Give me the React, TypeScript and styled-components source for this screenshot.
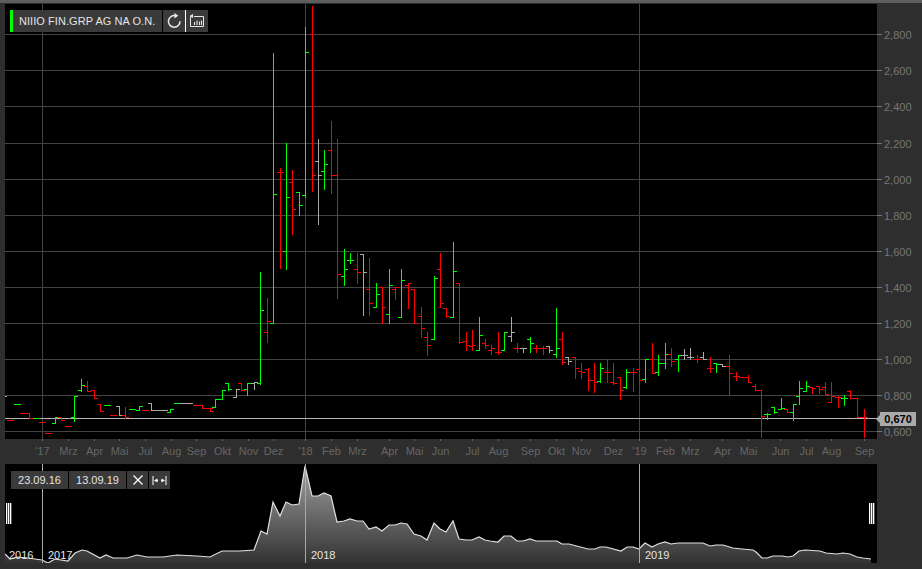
import React from 'react';
import styled, { createGlobalStyle } from 'styled-components';

const GlobalStyle = createGlobalStyle`
  html, body {
    margin: 0;
    padding: 0;
    background: #2e2e2e;
  }
`;

const Page = styled.div`
  width: 922px;
  height: 569px;
  box-sizing: border-box;
  padding: 4px 0 0 5px;
  overflow: hidden;
  position: relative;
  background: #2e2e2e;
  border-top: 0;
  font-family: 'Liberation Sans', Arial, sans-serif;
  box-shadow: inset 0 3px 0 #5e5e5e;
`;

const ChartArea = styled.div`
  position: relative;
  width: 917px;
  height: 460px;
`;

const ChartSvg = styled.svg`
  display: block;
  width: 917px;
  height: 460px;
  font-family: 'Liberation Sans', Arial, sans-serif;
  font-size: 11px;
`;

const Toolbar = styled.div`
  position: absolute;
  left: 5px;
  top: 6px;
  height: 22px;
  display: flex;
  align-items: stretch;
`;

const TitleBox = styled.div`
  display: flex;
  align-items: center;
  height: 22px;
  box-sizing: border-box;
  width: 152px;
  margin-right: 1px;
  padding-left: 6px;
  background: #3a3a3a;
  border-left: 3px solid #00ff00;
  color: #e4e4e4;
  font-size: 11px;
  letter-spacing: 0.06px;
  white-space: nowrap;
`;

const ToolButton = styled.div<{ $divided?: boolean }>`
  display: flex;
  align-items: center;
  justify-content: center;
  width: 22px;
  height: 22px;
  background: #3a3a3a;
  border-right: ${(p) => (p.$divided ? '1px solid #ffffff' : '0')};
`;

const PriceBadge = styled.div`
  position: absolute;
  left: 875px;
  top: 408px;
  width: 36px;
  height: 14px;
  background: #aaaaaa;
  color: #000000;
  font-size: 11px;
  font-weight: 700;
  line-height: 14px;
  text-align: center;

  &::before {
    content: '';
    position: absolute;
    left: -4px;
    top: 3px;
    border-style: solid;
    border-width: 4px 4px 4px 0;
    border-color: transparent #aaaaaa transparent transparent;
  }
`;

const NavPanel = styled.div`
  position: relative;
  width: 872px;
  height: 99px;
  background: #000000;
`;

const NavSvg = styled.svg`
  display: block;
  width: 872px;
  height: 99px;
  font-family: 'Liberation Sans', Arial, sans-serif;
  font-size: 11px;
`;

const DateBar = styled.div`
  position: absolute;
  left: 6px;
  top: 7px;
  display: flex;
  gap: 1px;
`;

const DateBox = styled.div`
  width: 57px;
  height: 18px;
  background: #3a3a3a;
  color: #e4e4e4;
  font-size: 11px;
  line-height: 18px;
  text-align: center;
`;

const DateButton = styled.div`
  display: flex;
  align-items: center;
  justify-content: center;
  width: 21px;
  height: 18px;
  background: #3a3a3a;
`;

const Handle = styled.div<{ $side: 'left' | 'right' }>`
  position: absolute;
  top: 39px;
  ${(p) => (p.$side === 'left' ? 'left: 1px;' : 'right: 2px;')}
  width: 6px;
  height: 21px;
  background: repeating-linear-gradient(90deg, #ffffff 0 1px, #555555 1px 2px);
`;

const PLOT_RIGHT = 877;
const GRID = [
  { y: 34, label: '2,800' },
  { y: 70, label: '2,600' },
  { y: 106, label: '2,400' },
  { y: 143, label: '2,200' },
  { y: 179, label: '2,000' },
  { y: 215, label: '1,800' },
  { y: 251, label: '1,600' },
  { y: 287, label: '1,400' },
  { y: 323, label: '1,200' },
  { y: 359, label: '1,000' },
  { y: 395, label: '0,800' },
  { y: 431, label: '0,600' },
];

const YEAR_LINES = [42, 305, 639];

const MONTHS: [number, string][] = [
  [42, "'17"], [68, 'Mrz'], [94, 'Apr'], [119, 'Mai'], [145, 'Jul'], [171, 'Aug'],
  [196, 'Sep'], [222, 'Okt'], [248, 'Nov'], [273, 'Dez'], [305, "'18"], [331, 'Feb'],
  [357, 'Mrz'], [389, 'Apr'], [414, 'Mai'], [440, 'Jun'], [472, 'Jul'], [498, 'Aug'],
  [530, 'Sep'], [556, 'Okt'], [581, 'Nov'], [613, 'Dez'], [639, "'19"], [665, 'Feb'],
  [690, 'Mrz'], [722, 'Apr'], [748, 'Mai'], [780, 'Jun'], [806, 'Jul'], [831, 'Aug'],
  [864, 'Sep'],
];

const COLORS: Record<string, string> = { r: '#ff0000', g: '#00ff00', n: '#aaaaaa' };

// x, high, low, open, close (all in page pixels), colour
type Bar = [number, number, number, number, number, string];
const BARS: Bar[] = [
  [3, 396, 396, 396, 396, 'n'], [10, 420, 420, 420, 420, 'r'], [17, 404, 404, 404, 404, 'g'],
  [23, 413, 413, 413, 413, 'r'], [29, 413, 418, 413, 418, 'r'], [36, 418, 418, 418, 418, 'g'],
  [42, 422, 422, 422, 422, 'r'], [48, 433, 433, 433, 433, 'r'], [55, 417, 423, 423, 417, 'g'],
  [61, 417, 420, 417, 420, 'r'], [68, 426, 426, 426, 426, 'r'], [74, 396, 421, 417, 396, 'g'],
  [81, 379, 391, 390, 385, 'g'], [87, 381, 391, 386, 391, 'r'], [94, 390, 398, 390, 398, 'r'],
  [100, 404, 411, 404, 411, 'r'], [107, 405, 405, 405, 405, 'g'], [113, 415, 415, 415, 415, 'r'],
  [119, 406, 415, 406, 415, 'n'], [125, 407, 418, 415, 417, 'r'], [132, 409, 409, 409, 409, 'g'],
  [139, 406, 410, 410, 406, 'g'], [145, 410, 410, 410, 410, 'r'], [151, 403, 410, 403, 410, 'n'],
  [158, 410, 410, 410, 410, 'n'], [164, 410, 410, 410, 410, 'n'], [170, 409, 412, 412, 409, 'g'],
  [177, 403, 403, 403, 403, 'g'], [183, 403, 403, 403, 403, 'n'], [189, 403, 403, 403, 403, 'n'],
  [196, 405, 405, 405, 405, 'r'], [202, 405, 408, 405, 408, 'r'], [209, 408, 408, 408, 408, 'r'],
  [210, 408, 411, 408, 411, 'r'], [215, 399, 407, 407, 399, 'g'], [222, 390, 399, 399, 390, 'g'],
  [228, 383, 390, 383, 389, 'g'], [236, 389, 397, 397, 389, 'n'], [241, 383, 390, 383, 390, 'r'],
  [247, 383, 395, 389, 383, 'g'], [254, 382, 389, 383, 382, 'n'], [260, 272, 384, 383, 310, 'g'],
  [267, 298, 342, 332, 321, 'r'], [273, 53, 323, 323, 194, 'g'], [280, 168, 268, 172, 172, 'r'],
  [286, 143, 269, 251, 197, 'g'], [292, 170, 234, 182, 209, 'r'], [299, 192, 215, 192, 205, 'g'],
  [305, 27, 197, 195, 52, 'g'], [312, 6, 191, 34, 175, 'r'], [318, 139, 224, 161, 175, 'n'],
  [324, 150, 189, 171, 164, 'g'], [331, 121, 193, 150, 175, 'r'], [337, 139, 298, 175, 274, 'r'],
  [344, 249, 285, 276, 269, 'g'], [350, 253, 263, 260, 260, 'g'], [357, 253, 283, 269, 272, 'r'],
  [363, 254, 315, 254, 272, 'n'], [369, 258, 315, 289, 303, 'r'], [376, 283, 307, 307, 294, 'g'],
  [382, 287, 323, 287, 307, 'r'], [389, 269, 323, 314, 285, 'g'], [395, 287, 299, 289, 287, 'r'],
  [401, 269, 317, 317, 280, 'g'], [408, 283, 308, 285, 283, 'r'], [414, 289, 323, 289, 323, 'r'],
  [421, 307, 337, 316, 328, 'r'], [427, 332, 355, 337, 345, 'r'], [434, 276, 339, 339, 278, 'g'],
  [440, 253, 307, 269, 303, 'r'], [446, 308, 317, 308, 316, 'r'], [453, 242, 317, 317, 271, 'g'],
  [459, 283, 343, 283, 342, 'r'], [466, 332, 350, 341, 345, 'r'], [472, 330, 350, 346, 345, 'r'],
  [479, 317, 350, 350, 335, 'g'], [485, 339, 348, 343, 345, 'r'], [491, 345, 354, 350, 348, 'r'],
  [498, 332, 354, 352, 352, 'r'], [504, 332, 350, 350, 332, 'g'], [511, 317, 341, 336, 332, 'n'],
  [517, 343, 352, 348, 348, 'r'], [523, 348, 352, 348, 348, 'n'], [530, 337, 352, 339, 343, 'g'],
  [536, 345, 352, 348, 348, 'r'], [543, 346, 354, 348, 348, 'r'], [549, 346, 352, 346, 350, 'n'],
  [556, 308, 357, 354, 348, 'g'], [562, 332, 364, 339, 362, 'r'], [568, 357, 364, 357, 361, 'n'],
  [575, 357, 378, 357, 368, 'r'], [581, 363, 378, 371, 372, 'r'], [588, 368, 390, 369, 380, 'r'],
  [594, 363, 392, 380, 382, 'r'], [600, 363, 382, 381, 368, 'g'], [607, 359, 382, 372, 372, 'r'],
  [613, 363, 384, 382, 383, 'r'], [620, 377, 399, 377, 390, 'r'], [626, 369, 388, 387, 372, 'g'],
  [633, 368, 391, 372, 372, 'r'], [639, 369, 384, 369, 380, 'r'], [645, 359, 382, 379, 359, 'g'],
  [652, 343, 373, 359, 373, 'r'], [658, 355, 375, 372, 363, 'g'], [665, 343, 368, 363, 354, 'g'],
  [671, 348, 366, 354, 361, 'r'], [678, 355, 371, 359, 355, 'g'], [684, 349, 359, 355, 355, 'n'],
  [690, 348, 359, 357, 357, 'n'], [697, 355, 362, 359, 359, 'r'], [703, 352, 359, 357, 359, 'n'],
  [710, 357, 372, 368, 368, 'r'], [716, 363, 372, 363, 364, 'g'], [722, 364, 366, 364, 366, 'n'],
  [729, 355, 395, 366, 373, 'r'], [736, 372, 380, 376, 376, 'r'], [742, 377, 377, 377, 377, 'r'],
  [748, 375, 382, 377, 382, 'r'], [755, 384, 390, 386, 390, 'r'], [761, 390, 437, 390, 416, 'r'],
  [767, 413, 419, 414, 414, 'g'], [774, 407, 413, 407, 412, 'g'], [781, 398, 409, 409, 408, 'g'],
  [787, 409, 412, 409, 412, 'r'], [793, 404, 420, 412, 404, 'g'], [799, 381, 404, 396, 388, 'g'],
  [806, 381, 391, 391, 386, 'g'], [812, 387, 393, 387, 388, 'r'], [819, 386, 393, 386, 389, 'r'],
  [825, 382, 394, 387, 394, 'r'], [831, 382, 402, 402, 396, 'r'], [838, 396, 407, 397, 397, 'r'],
  [844, 395, 405, 398, 398, 'g'], [850, 390, 398, 391, 398, 'r'], [857, 398, 417, 398, 417, 'r'],
  [864, 409, 437, 417, 417, 'r'],
];

const NAV_LINE = [
  [5, 554], [10, 559], [17, 557], [28, 558], [42, 560], [48, 563], [55, 559], [68, 561],
  [75, 553], [82, 550], [87, 551], [100, 558], [106, 555], [113, 558], [127, 558], [137, 555],
  [147, 557], [163, 557], [177, 555], [197, 556], [210, 557], [222, 551], [240, 551], [254, 550],
  [261, 531], [267, 534], [273, 502], [280, 516], [286, 502], [292, 505], [299, 504], [305, 466],
  [312, 496], [318, 496], [324, 493], [331, 496], [337, 522], [344, 521], [350, 519], [357, 521],
  [363, 521], [369, 529], [376, 527], [382, 531], [389, 525], [395, 525], [401, 523], [407, 524],
  [414, 534], [421, 536], [427, 540], [434, 523], [440, 529], [446, 532], [453, 521], [459, 539],
  [466, 540], [472, 540], [479, 537], [485, 540], [490, 541], [498, 542], [504, 536], [511, 536],
  [517, 541], [523, 541], [530, 539], [536, 541], [557, 541], [562, 544], [569, 544], [588, 549],
  [595, 549], [600, 547], [606, 547], [621, 551], [627, 547], [633, 547], [639, 549], [645, 543],
  [652, 547], [658, 544], [665, 542], [671, 544], [678, 543], [703, 543], [710, 546], [716, 545],
  [723, 545], [733, 548], [742, 549], [753, 550], [756, 552], [762, 558], [767, 558], [773, 556],
  [782, 556], [788, 557], [793, 556], [799, 551], [805, 550], [820, 551], [826, 553], [837, 554],
  [843, 553], [850, 554], [857, 557], [863, 558], [871, 559],
];

const NAV_YEARS: [number, string][] = [
  [9, '2016'], [48, '2017'], [311, '2018'], [645, '2019'],
];

const linePoints = NAV_LINE.map(([x, y]) => `${x},${y}`).join(' ');
const areaPoints = `5,563 ${linePoints} 871,563`;

const PriceChart = () => (
  <ChartSvg viewBox="5 4 917 460">
    <rect x={5} y={4} width={872} height={435} fill="#000000" />
    <g shapeRendering="crispEdges">
      {GRID.map((g) => (
        <React.Fragment key={g.y}>
          <line x1={5} x2={PLOT_RIGHT} y1={g.y + 0.5} y2={g.y + 0.5} stroke="#444444" />
          <line x1={PLOT_RIGHT} x2={882} y1={g.y + 0.5} y2={g.y + 0.5} stroke="#777777" />
        </React.Fragment>
      ))}
      {YEAR_LINES.map((x) => (
        <line key={x} x1={x + 0.5} x2={x + 0.5} y1={4} y2={439} stroke="#444444" />
      ))}
      {MONTHS.map(([x, label]) => (
        <line key={`${x}${label}`} x1={x + 0.5} x2={x + 0.5} y1={439} y2={441} stroke="#666666" />
      ))}
      <line x1={5} x2={PLOT_RIGHT} y1={418.5} y2={418.5} stroke="#b4b4b4" />
      {BARS.map(([x, high, low, open, close, color]) => (
        <g key={x} stroke={COLORS[color]}>
          {high !== low && <line x1={x + 0.5} x2={x + 0.5} y1={high} y2={low + 1} />}
          <line x1={x - 3} x2={x + 1} y1={open + 0.5} y2={open + 0.5} />
          <line x1={x} x2={x + 4} y1={close + 0.5} y2={close + 0.5} />
        </g>
      ))}
    </g>
    {GRID.map((g) => (
      <text key={g.label} x={884} y={g.y + 5} fill="#777777">
        {g.label}
      </text>
    ))}
    {MONTHS.map(([x, label]) => (
      <text key={`${x}${label}`} x={x + 0.5} y={455} fill="#666666" textAnchor="middle">
        {label}
      </text>
    ))}
  </ChartSvg>
);

const NavChart = () => (
  <NavSvg viewBox="5 464 872 99">
    <defs>
      <linearGradient id="navFill" x1="0" y1="466" x2="0" y2="563" gradientUnits="userSpaceOnUse">
        <stop offset="0" stopColor="#a0a0a0" />
        <stop offset="1" stopColor="#333333" />
      </linearGradient>
    </defs>
    <polygon points={areaPoints} fill="url(#navFill)" />
    <polyline points={linePoints} fill="none" stroke="#e0e0e0" strokeWidth={1.2} />
    {YEAR_LINES.map((x) => (
      <line
        key={x}
        x1={x + 0.5}
        x2={x + 0.5}
        y1={464}
        y2={563}
        stroke="#aaaaaa"
        shapeRendering="crispEdges"
      />
    ))}
    {NAV_YEARS.map(([x, label]) => (
      <text key={label} x={x} y={559} fill="#e4e4e4">
        {label}
      </text>
    ))}
  </NavSvg>
);

const RefreshIcon = () => (
  <svg width="16" height="16" viewBox="0 0 16 16" fill="none" stroke="#e8e8e8">
    <path d="M9.6 2.8 A5.8 5.8 0 1 0 14 8.2" strokeWidth={1.5} />
    <path d="M8.4 0 L12.4 2.8 L8.4 5.6 Z" fill="#e8e8e8" stroke="none" />
  </svg>
);

const PeriodIcon = () => (
  <svg width="16" height="14" viewBox="0 0 16 14" fill="none" stroke="#e8e8e8">
    <path d="M5 2.5 H14.5 V12.5 H1.5 V2.5" strokeWidth={1} />
    <path d="M0.5 2 L4 0 V4 Z" fill="#e8e8e8" stroke="none" />
    <path d="M5.5 8 V11 M8 6.5 V11 M10.5 7.5 V11 M12.5 6.5 V11" strokeWidth={1.1} />
  </svg>
);

const CloseIcon = () => (
  <svg width="12" height="12" viewBox="0 0 12 12" stroke="#ffffff" strokeWidth={1.3}>
    <path d="M1.5 1.5 L10.5 10.5 M10.5 1.5 L1.5 10.5" />
  </svg>
);

const FitIcon = () => (
  <svg width="15" height="9" viewBox="0 0 15 9" fill="#ffffff">
    <rect x={0.5} y={0} width={1} height={9} />
    <rect x={13.5} y={0} width={1} height={9} />
    <path d="M2 4.5 L5.5 2.5 V3.9 H6 V5.1 H5.5 V6.5 Z" />
    <path d="M13 4.5 L9.5 2.5 V3.9 H9 V5.1 H9.5 V6.5 Z" />
  </svg>
);

export default function App() {
  return (
    <Page>
      <GlobalStyle />
      <ChartArea>
        <PriceChart />
        <Toolbar>
          <TitleBox>NIIIO FIN.GRP AG NA O.N.</TitleBox>
          <ToolButton $divided>
            <RefreshIcon />
          </ToolButton>
          <ToolButton>
            <PeriodIcon />
          </ToolButton>
        </Toolbar>
        <PriceBadge>0,670</PriceBadge>
      </ChartArea>
      <NavPanel>
        <NavChart />
        <DateBar>
          <DateBox>23.09.16</DateBox>
          <DateBox>13.09.19</DateBox>
          <DateButton>
            <CloseIcon />
          </DateButton>
          <DateButton>
            <FitIcon />
          </DateButton>
        </DateBar>
        <Handle $side="left" />
        <Handle $side="right" />
      </NavPanel>
    </Page>
  );
}
